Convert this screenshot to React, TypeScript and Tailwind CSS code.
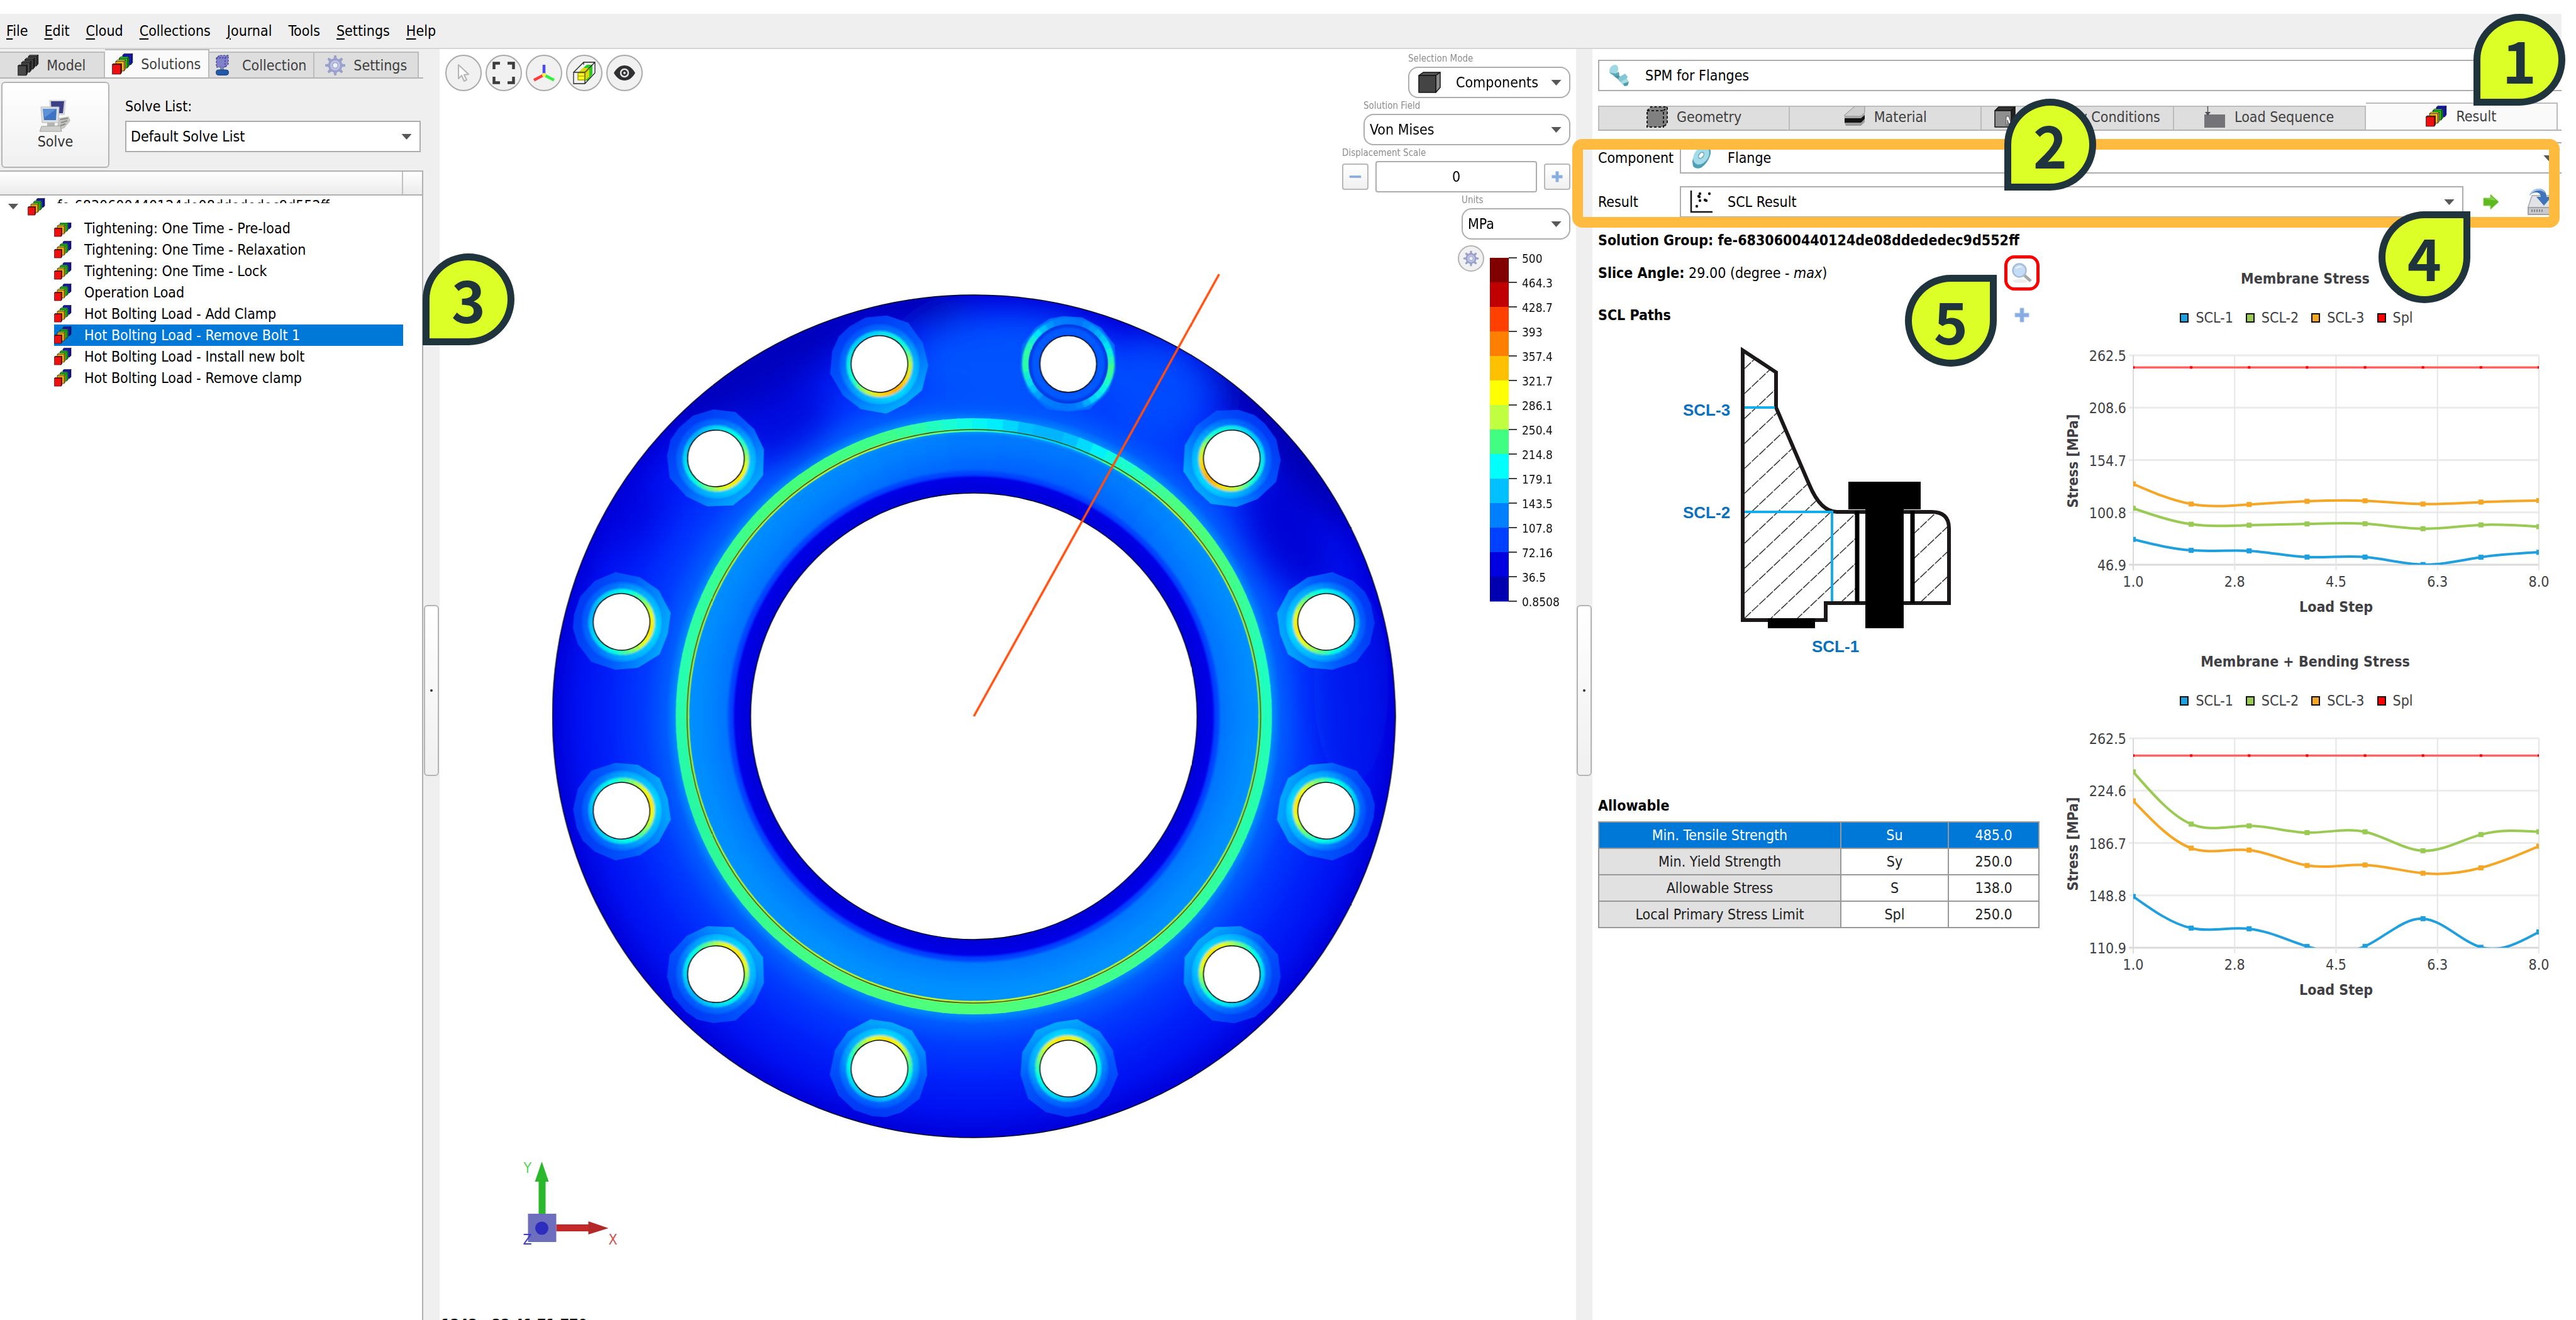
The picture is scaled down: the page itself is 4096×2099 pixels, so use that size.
import { useState, type ReactNode } from "react";

type IconProps = { className?: string };

/* ---------- icons ---------- */

const RESULT_COLORS = [
  ["#1a1ae0", "#1010b4", "#2020f0"],
  ["#1ed61a", "#14a812", "#30e82c"],
  ["#f8b814", "#dca010", "#ffe028"],
  ["#ee1010", "#a00808", "#d81010"],
];
const DARK_COLORS = [
  ["#484848", "#2a2a2a", "#5a5a5a"],
  ["#484848", "#2a2a2a", "#5a5a5a"],
  ["#484848", "#2a2a2a", "#5a5a5a"],
  ["#484848", "#2a2a2a", "#5a5a5a"],
];

function CubeRow({ className, colors }: IconProps & { colors: string[][] }) {
  return (
    <svg viewBox="0 0 28 28" className={className} aria-hidden="true">
      {colors.map(([front, side, top], i) => {
        const x = 14 - i * 4.5;
        const y = 2.2 + i * 4.1;
        const d = i === 3 ? 1.2 : 2;
        return (
          <g key={i} stroke="#0a0a0a" strokeWidth="0.6" strokeLinejoin="round">
            <path d={`M${x} ${y}l${d}-${d}h11l-${d} ${d}z`} fill={top} />
            <path d={`M${x + 11} ${y}l${d}-${d}v12l-${d} ${d}z`} fill={side} />
            <rect x={x} y={y} width="11" height="12.6" fill={front} />
          </g>
        );
      })}
    </svg>
  );
}
const ResultIcon = (p: IconProps) => <CubeRow {...p} colors={RESULT_COLORS} />;
const ModelIcon = (p: IconProps) => <CubeRow {...p} colors={DARK_COLORS} />;

function GearIcon({ className }: IconProps) {
  return (
    <svg viewBox="0 0 32 32" className={className} aria-hidden="true">
      <g fill="#9aa0cc">
        {[0, 45, 90, 135, 180, 225, 270, 315].map((a) => (
          <path key={a} d="M13.4 7l1-6h3.2l1 6z" transform={`rotate(${a} 16 16)`} />
        ))}
        <circle cx="16" cy="16" r="10.5" />
      </g>
      <circle cx="16" cy="16" r="7.5" fill="#bfc4e4" />
      <circle cx="16" cy="16" r="4" fill="#eef0fa" stroke="#8d93c0" strokeWidth="1" />
    </svg>
  );
}

function CollectionIcon({ className }: IconProps) {
  return (
    <svg viewBox="0 0 22 34" className={className} aria-hidden="true">
      <path d="M1 5l5-4h14v14l-5 5H1z" fill="#8080cc" />
      <path d="M1 5h14v15M15 5l5-4" fill="none" stroke="#3c3c80" strokeWidth="1.4" strokeDasharray="2.5 2" />
      <path d="M1 5v15h14l5-5V1H6z" fill="none" stroke="#3c3c80" strokeWidth="1.2" strokeDasharray="3 2" />
      <path d="M7 20h6v4H7z" fill="#7f88a8" />
      <rect x="0.5" y="24" width="20" height="8.5" rx="4" fill="#2158a8" stroke="#17407c" />
    </svg>
  );
}

function ComputersIcon({ className }: IconProps) {
  return (
    <svg viewBox="0 0 50 52" className={className} aria-hidden="true">
      <path d="M15 1h27l-2 24H17z" fill="#d4d6da" />
      <path d="M18 3h21l-2 19H19z" fill="#3a3f86" />
      <path d="M30 30l16-3 3 7-10 12-12 4z" fill="#c4c4c0" />
      <path d="M33 32l12-2M34 37l10-3M33 42l8-3" stroke="#8a8a88" strokeWidth="2" />
      <path d="M2 12h29l-1 25H4z" fill="#dcdee2" stroke="#b8babe" />
      <path d="M5 15h22l-1 18H7z" fill="#3d74c4" />
      <path d="M5 15h22l-19 14z" fill="#5e92d8" />
      <path d="M12 37h12v5H12z" fill="#b4b4b2" />
      <path d="M3 43l30-1 2 9H0z" fill="#cfcfcb" stroke="#a0a09c" />
    </svg>
  );
}

function CursorIcon({ className }: IconProps) {
  return (
    <svg viewBox="0 0 20 30" className={className} aria-hidden="true">
      <path d="M2 2v22l5-5 4 9 4-2-4-8 7-1z" fill="#fdfdfd" stroke="#b4b4b4" strokeWidth="2" strokeLinejoin="round" />
    </svg>
  );
}
function FitIcon({ className }: IconProps) {
  return (
    <svg viewBox="0 0 36 36" className={className} aria-hidden="true">
      <path d="M2.5 12V2.5H12M24 2.5h9.500V12M33.500 24v9.500H24M12 33.500H2.500V24" fill="none" stroke="#3c3c3c" strokeWidth="4.500" />
    </svg>
  );
}
function AxesIcon({ className }: IconProps) {
  return (
    <svg viewBox="0 0 36 28" className={className} aria-hidden="true">
      <g strokeWidth="4.500">
        <path d="M18 17V1" stroke="#4848ff" />
        <path d="M18 17L2 25.500" stroke="#ff3c3c" />
        <path d="M18 17l16 8.500" stroke="#30f040" />
      </g>
      <circle cx="18" cy="17" r="3" fill="#fff04a" />
    </svg>
  );
}
function SliceIcon({ className }: IconProps) {
  return (
    <svg viewBox="0 0 36 36" className={className} aria-hidden="true">
      <path d="M8 18L22 5h9v15L24 30H8z" fill="#28c828" />
      <path d="M8 18l8-8h10v14l-7 6H8z" fill="#e0d80c" />
      <rect x="8" y="18" width="11" height="11" fill="#ffff20" />
      <path d="M1 17h18v18H1zM1 17L17 1h18v17L19 35M19 17L35 1M17 1v4" fill="none" stroke="#222" strokeWidth="1.300" />
      <path d="M8 18h11v11H8zM19 18l8-8M8 23h11" fill="none" stroke="#8c8600" strokeWidth="1.200" />
    </svg>
  );
}
function EyeIcon({ className }: IconProps) {
  return (
    <svg viewBox="0 0 34 24" className={className} aria-hidden="true">
      <path d="M0 12C5 3.500 10.500 0 17 0s12 3.500 17 12c-5 8.500-10.500 12-17 12S5 20.500 0 12z" fill="#303032" />
      <circle cx="17" cy="12" r="6" fill="#303032" stroke="#e4e4e4" strokeWidth="2.500" />
      <circle cx="17" cy="12" r="2" fill="#e0e0e0" />
    </svg>
  );
}
function BlockIcon({ className }: IconProps) {
  return (
    <svg viewBox="0 0 36 34" className={className} aria-hidden="true">
      <g stroke="#141414" strokeWidth="1.500" strokeLinejoin="round">
        <path d="M1 6l7-5h27l-7 5z" fill="#555" />
        <path d="M28 6l7-5v24l-7 8z" fill="#8a8a8a" />
        <path d="M1 6h27v27H1z" fill="#444" />
      </g>
    </svg>
  );
}
function GeometryIcon({ className }: IconProps) {
  return (
    <svg viewBox="0 0 34 34" className={className} aria-hidden="true">
      <path d="M1 7l6-6h26v26l-6 6H1z" fill="#808080" />
      <path d="M1 7h26v26H1zM27 7l6-6M1 7l6-6h26v26l-6 6" fill="none" stroke="#1c1c1c" strokeWidth="2" strokeDasharray="4 3" />
    </svg>
  );
}
function MaterialIcon({ className }: IconProps) {
  return (
    <svg viewBox="0 0 34 34" className={className} aria-hidden="true">
      <path d="M1 14L17 0h16v10L27 16H1z" fill="#cfcfcf" stroke="#8c8c8c" />
      <path d="M1 15h26l6-6v6l-6 5H1z" fill="#a8a8a8" />
      <path d="M1 19h26l6-5v7l-6 6H1z" fill="#141414" />
      <path d="M1 26h26l6-6v5l-6 6H3z" fill="#9a9a9a" />
    </svg>
  );
}
function BoundaryIcon({ className }: IconProps) {
  return (
    <svg viewBox="0 0 34 34" className={className} aria-hidden="true">
      <g stroke="#141414" strokeWidth="1.500" strokeLinejoin="round">
        <path d="M1 7l6-6h26l-6 6z" fill="#333" />
        <path d="M27 7l6-6v26l-6 6z" fill="#222" />
        <path d="M1 7h26v26H1z" fill="#8f8f8f" />
      </g>
      <path d="M19 16h4l4 12h-4l-2-6v8h-2z" fill="#fff" stroke="#333" strokeWidth="0.800" />
    </svg>
  );
}
function LoadIcon({ className }: IconProps) {
  return (
    <svg viewBox="0 0 34 34" className={className} aria-hidden="true">
      <rect x="0" y="13" width="33" height="21" fill="#747478" />
      <path d="M5.500 0v14" stroke="#505054" strokeWidth="1.500" />
      <path d="M1 9h9l-4.500 6z" fill="#505054" />
    </svg>
  );
}
function BoltIcon({ className }: IconProps) {
  return (
    <svg viewBox="0 0 34 34" className={className} aria-hidden="true">
      <path d="M13 12l9 10 6 4-3 4-8-6-9-7z" fill="#4b93a4" />
      <ellipse cx="9" cy="8" rx="6.500" ry="8.500" transform="rotate(32 9 8)" fill="#9fd8e2" />
      <path d="M2 12l8 6 8-2-1-5-5 3-6-1z" fill="#5aa9b8" />
      <path d="M17 20l10-6 4 5-2 5-9 4-4-4z" fill="#84c6d3" />
      <path d="M21 26l9-4 3 5-2 6-5 1-5-4z" fill="#a6dbe5" />
      <path d="M24 30l9-3-2 6-5 1z" fill="#4e9aab" />
    </svg>
  );
}
function FlangeIcon({ className }: IconProps) {
  return (
    <svg viewBox="0 0 34 34" className={className} aria-hidden="true">
      <path d="M24 1c6-1 9 3 8 9-1 7-7 17-14 22-5 3-12 2-14-2l-1-7c0-7 8-19 21-22z" fill="#4f9fb4" />
      <ellipse cx="17" cy="13.500" rx="11" ry="15.500" transform="rotate(36 17 13.500)" fill="#a4dbe8" />
      <ellipse cx="17" cy="13" rx="3.500" ry="5.500" transform="rotate(36 17 13)" fill="#fff" stroke="#62aabd" strokeWidth="1.500" />
    </svg>
  );
}
function ScatterIcon({ className }: IconProps) {
  return (
    <svg viewBox="0 0 36 36" className={className} aria-hidden="true">
      <path d="M2 0v34h34" fill="none" stroke="#161616" strokeWidth="2.500" />
      <g fill="#161616">
        {[[16, 5], [31, 5], [15, 10], [16, 16], [26, 16], [11, 25], [14, 9], [24, 15]].map(([x, y]) => (
          <circle key={`${x}-${y}`} cx={x} cy={y} r="2.200" />
        ))}
      </g>
    </svg>
  );
}
function RunArrowIcon({ className }: IconProps) {
  return (
    <svg viewBox="0 0 26 26" className={className} aria-hidden="true">
      <path d="M1 7h11V1l13 12-13 12v-6H1z" fill="#5eb820" stroke="#8ccf58" strokeWidth="1" />
      <path d="M2 8h11V4l8 7z" fill="#8ad24a" />
    </svg>
  );
}
function SaveIcon({ className }: IconProps) {
  return (
    <svg viewBox="0 0 44 44" className={className} aria-hidden="true">
      <path d="M7 12h30l6 18v12H1V30z" fill="#e2e3e6" stroke="#a4a6aa" strokeWidth="1.500" />
      <path d="M1 31h42v11H1z" fill="#c8cacd" stroke="#94969a" strokeWidth="1.500" />
      <path d="M6 36h18" stroke="#85878b" strokeWidth="4" strokeDasharray="2 2" />
      <path d="M3 12C7-2 30-4 30 14h8L26 28 14 14h7c0-8-11-10-18-2z" fill="#3f74bd" />
      <path d="M3 12C7-2 24-2 28 8 20 0 10 4 3 12z" fill="#a9c8ee" />
    </svg>
  );
}
function MagnifierIcon({ className }: IconProps) {
  return (
    <svg viewBox="0 0 34 34" className={className} aria-hidden="true">
      <ellipse cx="14" cy="30" rx="12" ry="3" fill="#ececec" />
      <path d="M20 20l11 10" stroke="#a8a8a8" strokeWidth="5" />
      <circle cx="13" cy="13" r="10.500" fill="#c4dcf6" stroke="#a8bcd8" strokeWidth="2.500" />
      <path d="M6 11c2-5 8-6 12-3-5 0-9 1-12 3z" fill="#eef6ff" />
    </svg>
  );
}
function PlusIcon({ className }: IconProps) {
  return (
    <svg viewBox="0 0 24 24" className={className} aria-hidden="true">
      <path d="M9 1h6v8h8v6h-8v8H9v-8H1V9h8z" fill="#86ace0" stroke="#a9c4ea" strokeWidth="1" />
    </svg>
  );
}
function MinusIcon({ className }: IconProps) {
  return (
    <svg viewBox="0 0 24 24" className={className} aria-hidden="true">
      <path d="M2 10h20v4H2z" fill="#86ace0" />
    </svg>
  );
}
function Caret({ className }: IconProps) {
  return (
    <svg viewBox="0 0 18 10" className={className} aria-hidden="true">
      <path d="M0 0h18l-9 10z" fill="#585858" />
    </svg>
  );
}

/* ---------- form parts ---------- */

function Combo({
  id,
  label,
  value,
  icon,
  className = "",
  selectClass = "pl-2",
}: {
  id: string;
  label?: string;
  value: string;
  icon?: ReactNode;
  className?: string;
  selectClass?: string;
}) {
  return (
    <div className={`relative flex h-[50px] items-center border-2 border-[#adadad] bg-white ${className}`}>
      {icon}
      <select
        id={id}
        aria-label={label}
        defaultValue={value}
        className={`h-full min-w-0 flex-1 appearance-none bg-transparent outline-none ${selectClass}`}
      >
        <option>{value}</option>
      </select>
      <Caret className="pointer-events-none absolute right-3 top-[19px] h-[9px] w-[17px]" />
    </div>
  );
}

/* ---------- left panel ---------- */

const MENU = [
  ["F", "ile"],
  ["E", "dit"],
  ["C", "loud"],
  ["C", "ollections"],
  ["J", "ournal"],
  ["", "Tools"],
  ["S", "ettings"],
  ["H", "elp"],
];

const LEFT_TABS = [
  { name: "Model", icon: <ModelIcon className="size-[34px]" /> },
  { name: "Solutions", icon: <ResultIcon className="size-[34px]" /> },
  { name: "Collection", icon: <CollectionIcon className="mr-2 h-[34px] w-[22px]" /> },
  { name: "Settings", icon: <GearIcon className="size-[34px]" /> },
];

const STEPS = [
  "Tightening: One Time - Pre-load",
  "Tightening: One Time - Relaxation",
  "Tightening: One Time - Lock",
  "Operation Load",
  "Hot Bolting Load - Add Clamp",
  "Hot Bolting Load - Remove Bolt 1",
  "Hot Bolting Load - Install new bolt",
  "Hot Bolting Load - Remove clamp",
];

function LeftPanel() {
  const [tab, setTab] = useState("Solutions");
  const [step, setStep] = useState(5);
  return (
    <aside className="flex w-[673px] shrink-0 flex-col">
      <div role="tablist" className="flex items-end border-b-2 border-[#b4b4b4] pr-[7px]">
        {LEFT_TABS.map((t) => (
          <button
            key={t.name}
            role="tab"
            aria-selected={tab === t.name}
            onClick={() => setTab(t.name)}
            className={`flex flex-1 items-center justify-center gap-3 border-t-2 border-r-2 border-[#bcbcbc] text-[#404040] ${
              tab === t.name ? "h-[45px] bg-[#fafafa]" : "h-[41px] bg-[#dedede]"
            }`}
          >
            {t.icon}
            {t.name}
          </button>
        ))}
      </div>
      <div className="flex pt-[5px] pl-0.5">
        <button className="flex h-[137px] w-[172px] flex-col items-center justify-center rounded-md border-2 border-[#b4b4b4] bg-linear-to-b from-white to-[#f0f0f0] text-[#303030]">
          <ComputersIcon className="h-[52px] w-[50px]" />
          Solve
        </button>
        <div className="ml-[25px] flex w-[470px] flex-col pt-6">
          <label htmlFor="solve-list" className="mb-2 leading-[30px]">
            Solve List:
          </label>
          <Combo id="solve-list" value="Default Solve List" selectClass="pl-[7px]" />
        </div>
      </div>
      <div className="mt-1 flex h-10 border-y-2 border-r-2 border-[#b0b0b0] bg-linear-to-b from-white to-[#ebebeb]">
        <div className="flex-1 border-r-2 border-[#c0c0c0]" />
        <div className="w-[30px]" />
      </div>
      <div className="flex-1 border-r-2 border-[#b0b0b0] bg-white">
        <div className="flex h-[35px] items-center">
          <Caret className="ml-3 h-[9px] w-[18px]" />
          <ResultIcon className="ml-[14px] size-[28px]" />
          <div className="mt-1 ml-[19px] h-[8px] self-start overflow-hidden leading-6">
            fe-6830600440124de08ddededec9d552ff
          </div>
        </div>
        <ul>
          {STEPS.map((s, i) => (
            <li key={s}>
              <button
                onClick={() => setStep(i)}
                className={`ml-[86px] flex h-[34px] w-[555px] items-center gap-5 text-left ${
                  i === step ? "bg-[#0078d7] text-white" : ""
                }`}
              >
                <ResultIcon className={i === 0 ? "size-[28px] [clip-path:inset(5px_0_0_0)]" : "size-[28px]"} />
                {s}
              </button>
            </li>
          ))}
        </ul>
      </div>
    </aside>
  );
}

function Splitter() {
  return (
    <div className="flex w-[26px] shrink-0 items-center justify-center pt-[18px]">
      <div className="flex h-[272px] w-6 items-center justify-center rounded-md border-2 border-[#b4b4b4] bg-linear-to-b from-white to-[#f0f0f0]">
        <span className="size-1 rounded-full bg-[#333]" />
      </div>
    </div>
  );
}

/* ---------- stress plot of the flange ---------- */

type Stop = [number, string];

function mix(stops: Stop[], t: number) {
  let i = 0;
  while (i < stops.length - 2 && t > stops[i + 1][0]) i++;
  const [t0, a] = stops[i];
  const [t1, b] = stops[i + 1];
  const f = Math.min(1, Math.max(0, (t - t0) / (t1 - t0)));
  const ch = (c: string, k: number) => parseInt(c.slice(1 + k * 2, 3 + k * 2), 16);
  const v = [0, 1, 2].map((k) => Math.round(ch(a, k) + (ch(b, k) - ch(a, k)) * f));
  return `rgb(${v.join(",")})`;
}

function polar(r: number, deg: number): [number, number] {
  const a = (deg * Math.PI) / 180;
  return [r * Math.sin(a), -r * Math.cos(a)];
}

function SweepRing({ r, width, stops, step }: { r: number; width: number; stops: Stop[]; step: number }) {
  const parts = [];
  for (let a = -180; a < 180; a += step) {
    const [x0, y0] = polar(r, a - 0.3);
    const [x1, y1] = polar(r, a + step + 0.3);
    parts.push(
      <path
        key={a}
        d={`M${x0.toFixed(2)} ${y0.toFixed(2)}A${r} ${r} 0 0 1 ${x1.toFixed(2)} ${y1.toFixed(2)}`}
        stroke={mix(stops, a + step / 2)}
        strokeWidth={width}
        fill="none"
      />,
    );
  }
  return <>{parts}</>;
}

const GROOVE: Stop[] = [
  [-180, "#50ff78"],
  [-150, "#46ff80"],
  [-110, "#28f8a0"],
  [-80, "#28ffb0"],
  [-40, "#46ff78"],
  [-15, "#3cff8c"],
  [-3, "#14ffdc"],
  [4, "#00f0ff"],
  [12, "#00b4ff"],
  [18, "#00b4ff"],
  [25, "#00f0ff"],
  [32, "#1effc8"],
  [45, "#50ff78"],
  [60, "#46ff82"],
  [80, "#1effc0"],
  [110, "#28ffaa"],
  [180, "#50ff78"],
];
const GROOVE_EDGE: Stop[] = [
  [-180, "#c0f030"],
  [-90, "#8cf050"],
  [-20, "#b4f03c"],
  [0, "#3cffa0"],
  [10, "#00d2ff"],
  [20, "#00d2ff"],
  [30, "#50ff82"],
  [45, "#b4f03c"],
  [90, "#78f060"],
  [180, "#c0f030"],
];
const INNER_TINT: Stop[] = [
  [-180, "#0098ff"],
  [-30, "#0088ff"],
  [0, "#006eff"],
  [25, "#0064ff"],
  [50, "#0088ff"],
  [180, "#0098ff"],
];
const HOT: Stop[] = [
  [-180, "#ffa800"],
  [-150, "#ffdc00"],
  [-120, "#b4ff46"],
  [-90, "#14ffd2"],
  [0, "#00c8ff"],
  [90, "#14ffd2"],
  [120, "#b4ff46"],
  [150, "#ffdc00"],
  [180, "#ffa800"],
];
const WARM: Stop[] = [
  [-180, "#ffe600"],
  [-150, "#e6ff14"],
  [-120, "#64ff82"],
  [-90, "#00ffe6"],
  [0, "#00aaff"],
  [90, "#00ffe6"],
  [120, "#64ff82"],
  [150, "#e6ff14"],
  [180, "#ffe600"],
];
const OUTER_HALO: Stop[] = [
  [-180, "#00dcff"],
  [-110, "#00aaff"],
  [-60, "#0070ff"],
  [0, "#0058ff"],
  [60, "#0070ff"],
  [110, "#00aaff"],
  [180, "#00dcff"],
];
const FREED: Stop[] = [
  [-180, "#0074ff"],
  [-145, "#0080ff"],
  [-120, "#00d2ff"],
  [-95, "#28ffaa"],
  [-72, "#32ffa0"],
  [-45, "#00e6ff"],
  [-20, "#0084ff"],
  [15, "#0074ff"],
  [40, "#00a0ff"],
  [70, "#00f0f0"],
  [98, "#46ff82"],
  [120, "#14ffdc"],
  [145, "#00d2ff"],
  [165, "#0084ff"],
  [180, "#0074ff"],
];

const HALO_SHAPE = [
  [-8, -76], [22, -74], [52, -58], [74, -30], [76, 10], [64, 44],
  [34, 72], [0, 76], [-34, 72], [-64, 44], [-76, 10], [-74, -30], [-52, -58], [-30, -72],
]
  .map((p) => p.join(","))
  .join(" ");

function BoltHole({ angle }: { angle: number }) {
  const [x, y] = polar(580, angle);
  const freed = angle === 15;
  const hot = angle === 345 || angle === 45;
  const turn = angle === 345 ? angle - 18 : angle === 45 ? angle + 5 : angle;
  return (
    <g transform={`translate(${x.toFixed(1)} ${y.toFixed(1)}) rotate(${freed ? 0 : turn})`}>
      {freed ? (
        <>
          <polygon points={HALO_SHAPE} fill="#006cff" />
          <g filter="url(#soft1)">
            <SweepRing r={68} width={11} stops={FREED} step={10} />
          </g>
          <circle r="63" fill="#003ce6" />
          <circle r="52" fill="none" stroke="#0058ff" strokeWidth="12" filter="url(#soft2)" />
        </>
      ) : (
        <>
          <polygon points={HALO_SHAPE} fill="url(#halo)" />
          <circle r="64" fill="url(#haloInner)" />
          <g filter="url(#soft2)">
            <SweepRing r={56} width={10} stops={OUTER_HALO} step={10} />
            <SweepRing r={48} width={9} stops={hot ? HOT : WARM} step={10} />
          </g>
        </>
      )}
      <circle r="45" fill="#fff" stroke="#101010" strokeWidth="1.500" />
    </g>
  );
}

function Viewer3D() {
  return (
    <svg
      viewBox="0 0 1808 2021"
      preserveAspectRatio="xMidYMid slice"
      className="absolute inset-0 h-full w-full"
      role="img"
      aria-label="Von Mises stress on the flange"
    >
      <defs>
        <radialGradient id="plate" gradientUnits="userSpaceOnUse" cx="0" cy="0" r="670">
          <stop offset="0.530" stopColor="#0000d8" />
          <stop offset="0.566" stopColor="#0000e8" />
          <stop offset="0.573" stopColor="#003cff" />
          <stop offset="0.590" stopColor="#005aff" />
          <stop offset="0.640" stopColor="#0082ff" />
          <stop offset="0.675" stopColor="#0092ff" />
          <stop offset="0.705" stopColor="#0090ff" />
          <stop offset="0.730" stopColor="#005cff" />
          <stop offset="0.780" stopColor="#003cff" />
          <stop offset="0.860" stopColor="#0022fa" />
          <stop offset="0.940" stopColor="#0010f0" />
          <stop offset="1" stopColor="#0000d8" />
        </radialGradient>
        <linearGradient id="halo" x1="0" y1="0" x2="0" y2="1">
          <stop offset="0" stopColor="#0038f4" />
          <stop offset="0.500" stopColor="#005aff" />
          <stop offset="1" stopColor="#00aaff" />
        </linearGradient>
        <linearGradient id="haloInner" x1="0" y1="0" x2="0" y2="1">
          <stop offset="0" stopColor="#0048fa" />
          <stop offset="0.500" stopColor="#0070ff" />
          <stop offset="1" stopColor="#00c0ff" />
        </linearGradient>
        <filter id="soft1"><feGaussianBlur stdDeviation="1" /></filter>
        <filter id="soft2"><feGaussianBlur stdDeviation="1.600" /></filter>
        <filter id="soft40" x="-60%" y="-60%" width="220%" height="220%"><feGaussianBlur stdDeviation="26" /></filter>
        <clipPath id="outerPlate">
          <path clipRule="evenodd" d="M-670 0a670 670 0 1 0 1340 0a670 670 0 1 0-1340 0zM-473 0a473 473 0 1 0 946 0a473 473 0 1 0-946 0z" />
        </clipPath>
      </defs>

      <g transform="translate(850 1061)">
        <circle r="670" fill="url(#plate)" />
        <g clipPath="url(#outerPlate)">
          <g filter="url(#soft40)">
            <ellipse cx="-330" cy="-560" rx="180" ry="50" transform="rotate(-30 -330 -560)" fill="#0000b4" opacity="0.800" />
            <ellipse cx="-300" cy="-470" rx="80" ry="50" transform="rotate(-33 -300 -470)" fill="#0000d2" opacity="0.700" />
            <ellipse cx="-100" cy="-655" rx="90" ry="24" fill="#0000a8" opacity="0.900" />
            <ellipse cx="505" cy="-440" rx="170" ry="45" transform="rotate(49 505 -440)" fill="#0000b0" opacity="0.950" />
            <ellipse cx="500" cy="-290" rx="100" ry="55" transform="rotate(60 500 -290)" fill="#0000d0" opacity="0.900" />
            <ellipse cx="60" cy="-560" rx="160" ry="80" fill="#0058ff" opacity="0.900" />
            <ellipse cx="290" cy="-520" rx="90" ry="80" transform="rotate(30 290 -520)" fill="#0050ff" opacity="0.900" />
            <ellipse cx="-560" cy="-330" rx="60" ry="60" fill="#0000d8" opacity="0.600" />
            <ellipse cx="600" cy="-50" rx="60" ry="160" fill="#0010e8" opacity="0.500" />
          </g>
        </g>
        <g opacity="0.550" filter="url(#soft2)">
          <SweepRing r={420} width={58} stops={INNER_TINT} step={5} />
        </g>
        <SweepRing r={465} width={18} stops={GROOVE} step={3} />
        <SweepRing r={455} width={5} stops={GROOVE_EDGE} step={3} />
        <circle r="456" fill="none" stroke="#34501c" strokeWidth="1.500" />
        <circle r="670" fill="none" stroke="#05051e" strokeWidth="1.500" />
        <circle r="355" fill="#fff" stroke="#05051e" strokeWidth="1.500" />
        {Array.from({ length: 12 }, (_, k) => (
          <BoltHole key={k} angle={15 + 30 * k} />
        ))}
        <path d="M0 0L390 -703" stroke="#ff4e0e" strokeWidth="3.500" />
      </g>

      <g>
        <rect x="158" y="1800" width="11" height="55" fill="#2cb82c" />
        <path d="M152 1801l11-32 11 32z" fill="#2cb82c" />
        <rect x="186" y="1869" width="52" height="11" fill="#c42828" />
        <path d="M237 1864l32 11-32 10z" fill="#b42828" />
        <rect x="141" y="1852" width="45" height="45" fill="#6e6ebe" />
        <circle cx="163" cy="1875" r="10.500" fill="#2c2cbe" />
        <g fontSize="23">
          <text x="134" y="1787" fill="#5cd45c">Y</text>
          <text x="269" y="1901" fill="#d25050">X</text>
          <text x="133" y="1901" fill="#3c3cc8">Z</text>
        </g>
        <text x="3" y="2036" fontSize="23" fontWeight="700">1242 - 22 41 71.770</text>
      </g>
    </svg>
  );
}

const BANDS: [string, string][] = [
  ["#800000", "500"],
  ["#c00000", "464.3"],
  ["#ff4000", "428.7"],
  ["#ff8000", "393"],
  ["#ffc000", "357.4"],
  ["#ffff00", "321.7"],
  ["#c0ff40", "286.1"],
  ["#40ff80", "250.4"],
  ["#00ffff", "214.8"],
  ["#00c0ff", "179.1"],
  ["#0080ff", "143.5"],
  ["#0040ff", "107.8"],
  ["#0000e0", "72.16"],
  ["#0000b0", "36.5"],
];

function StressScale() {
  return (
    <svg viewBox="0 0 128 590" className="h-[590px] w-[128px]" role="img" aria-label="Stress scale in MPa">
      {BANDS.map(([color, label], i) => (
        <g key={label}>
          <rect x="0" y={20 + i * 39} width="30" height="39.500" fill={color} />
          <path d={`M30 ${20 + i * 39}h13`} stroke="#000" strokeWidth="1.500" />
          <text x="51" y={28 + i * 39} fontSize="19" fill="#101010">{label}</text>
        </g>
      ))}
      <path d="M30 566h13" stroke="#000" strokeWidth="1.500" />
      <text x="51" y="574" fontSize="19" fill="#101010">0.8508</text>
    </svg>
  );
}

const TOOLS: [string, ReactNode][] = [
  ["Select", <CursorIcon className="h-[30px] w-5" />],
  ["Fit view", <FitIcon className="size-[36px]" />],
  ["Axes", <AxesIcon className="h-7 w-9" />],
  ["Slice", <SliceIcon className="size-[36px]" />],
  ["Visibility", <EyeIcon className="h-6 w-[34px]" />],
];

function Viewport() {
  return (
    <main className="relative flex flex-1 items-start justify-between overflow-hidden bg-white px-[9px]">
      <Viewer3D />
      <div className="relative flex gap-[6px] pt-[9px]">
        {TOOLS.map(([name, icon]) => (
          <button
            key={name}
            aria-label={name}
            className="flex size-[58px] items-center justify-center rounded-full border-2 border-[#ababab] bg-[#f1f1f1]"
          >
            {icon}
          </button>
        ))}
      </div>
      <div className="relative flex flex-col items-end pt-[3px]">
        <div className="w-[258px]">
          <label htmlFor="mode" className="block text-[15px] leading-[25px] text-[#8c8c8c]">Selection Mode</label>
          <Combo
            id="mode"
            value="Components"
            icon={<BlockIcon className="ml-[14px] h-[34px] w-9 shrink-0" />}
            className="rounded-2xl"
            selectClass="pl-6"
          />
        </div>
        <div className="w-[329px]">
          <label htmlFor="field" className="block text-[15px] leading-[25px] text-[#8c8c8c]">Solution Field</label>
          <Combo id="field" value="Von Mises" className="rounded-2xl" />
        </div>
        <div className="w-[363px]">
          <label htmlFor="scale" className="block text-[15px] leading-[25px] text-[#8c8c8c]">Displacement Scale</label>
          <div className="flex items-center gap-[11px]">
            <button aria-label="Decrease scale" className="flex size-[42px] items-center justify-center rounded border-2 border-[#b8b8b8] bg-linear-to-b from-white to-[#f0f0f0]">
              <MinusIcon className="size-[22px]" />
            </button>
            <input id="scale" defaultValue="0" className="h-[50px] w-[257px] rounded border-2 border-[#adadad] bg-white text-center" />
            <button aria-label="Increase scale" className="flex size-[42px] items-center justify-center rounded border-2 border-[#b8b8b8] bg-linear-to-b from-white to-[#f0f0f0]">
              <PlusIcon className="size-[18px]" />
            </button>
          </div>
        </div>
        <div className="w-[173px]">
          <label htmlFor="units" className="block text-[15px] leading-[25px] text-[#8c8c8c]">Units</label>
          <Combo id="units" value="MPa" className="rounded-2xl" />
        </div>
        <div className="flex items-start gap-[9px] pt-[9px]">
          <button aria-label="Legend settings" className="flex size-[42px] items-center justify-center rounded-full border-2 border-[#b4b4b4] bg-[#f1f1f1]">
            <GearIcon className="size-[26px]" />
          </button>
          <StressScale />
        </div>
      </div>
    </main>
  );
}

/* ---------- right panel ---------- */

function SclDiagram() {
  const outline =
    "M100 7V436H232V409H428V290Q428 264 400 264H250C228 264 214 240 206 221L153 98V42Z";
  const hatch = Array.from({ length: 20 }, (_, i) => {
    const y = 36 + i * 39.700;
    return `M103 ${y}l330 -311`;
  }).join("");
  return (
    <svg viewBox="0 0 450 500" className="h-[500px] w-[450px]" role="img" aria-label="SCL path locations">
      <defs>
        <clipPath id="section">
          <path d={outline} />
        </clipPath>
      </defs>
      <path d={hatch} clipPath="url(#section)" stroke="#333" strokeWidth="1.500" strokeDasharray="14 2" fill="none" />
      <rect x="282" y="264" width="88" height="144" fill="#fff" />
      <path d={outline} fill="none" stroke="#1c1819" strokeWidth="6" />
      <path d="M282 262v147M370 262v147" stroke="#000" strokeWidth="7" />
      <rect x="268" y="216" width="115" height="44" />
      <rect x="295" y="216" width="61" height="233" />
      <rect x="140" y="433" width="75" height="16" />
      <path d="M103 98h48M103 264h139v142" fill="none" stroke="#12aeec" strokeWidth="4" />
      <g fontFamily="'Liberation Sans', sans-serif" fontWeight="700" fontSize="26" fill="#0a70c0">
        <text x="5" y="111">SCL-3</text>
        <text x="5" y="274">SCL-2</text>
        <text x="210" y="487">SCL-1</text>
      </g>
    </svg>
  );
}

type Series = { name: string; color: string; values: number[] };

const MEMBRANE: Series[] = [
  { name: "SCL-1", color: "#209fdf", values: [73.0, 61.7, 61.2, 54.8, 54.8, 47.1, 54.6, 59.7] },
  { name: "SCL-2", color: "#99ca53", values: [105.0, 88.6, 87.6, 88.9, 89.1, 84.0, 87.9, 86.1] },
  { name: "SCL-3", color: "#f6a625", values: [130.1, 109.4, 108.9, 112.2, 112.7, 109.4, 111.4, 113.0] },
];
const BENDING: Series[] = [
  { name: "SCL-1", color: "#209fdf", values: [148.0, 125.1, 124.6, 111.8, 111.9, 131.9, 111.2, 122.3] },
  { name: "SCL-2", color: "#99ca53", values: [238.2, 200.4, 199.1, 194.2, 194.8, 181.1, 192.8, 194.8] },
  { name: "SCL-3", color: "#f6a625", values: [217.2, 183.0, 181.6, 170.4, 170.8, 164.8, 168.7, 184.4] },
];

/* Natural cubic spline through evenly spaced points, as a Bezier path. */
function spline(xs: number[], ys: number[]) {
  const n = ys.length - 1;
  const solve = (p: number[]) => {
    const rhs = p.slice(0, n).map((_, i) =>
      i === 0 ? p[0] + 2 * p[1] : i === n - 1 ? (8 * p[n - 1] + p[n]) / 2 : 4 * p[i] + 2 * p[i + 1],
    );
    const out = [rhs[0] / 2];
    const tmp = [0];
    let b = 2;
    for (let i = 1; i < n; i++) {
      tmp[i] = 1 / b;
      b = (i < n - 1 ? 4 : 3.5) - tmp[i];
      out[i] = (rhs[i] - out[i - 1]) / b;
    }
    for (let i = 1; i < n; i++) out[n - i - 1] -= tmp[n - i] * out[n - i];
    return out;
  };
  const cx = solve(xs);
  const cy = solve(ys);
  let d = `M${xs[0]} ${ys[0]}`;
  for (let i = 0; i < n; i++) {
    const ex = i < n - 1 ? 2 * xs[i + 1] - cx[i + 1] : (xs[n] + cx[n - 1]) / 2;
    const ey = i < n - 1 ? 2 * ys[i + 1] - cy[i + 1] : (ys[n] + cy[n - 1]) / 2;
    d += `C${[cx[i], cy[i], ex, ey, xs[i + 1], ys[i + 1]].map((v) => v.toFixed(1)).join(" ")}`;
  }
  return d;
}

const PLOT = { left: 142, right: 787, top: 45, bottom: 378 };
const X_TICKS = ["1.0", "2.8", "4.5", "6.3", "8.0"];

function StressChart({
  id,
  title,
  ticks,
  series,
  className = "",
}: {
  id: string;
  title: string;
  ticks: number[];
  series: Series[];
  className?: string;
}) {
  const max = ticks[0];
  const min = ticks[ticks.length - 1];
  const w = PLOT.right - PLOT.left;
  const h = PLOT.bottom - PLOT.top;
  const sx = (i: number) => PLOT.left + (w * i) / 7;
  const sy = (v: number) => PLOT.top + (h * (max - v)) / (max - min);
  return (
    <figure className={className}>
      <figcaption className="pl-2 text-center leading-[30px] font-bold text-[#404044]">{title}</figcaption>
      <ul className="mt-8 flex justify-center gap-5 pr-5 leading-[30px] text-[#404044]">
        {[...series, { name: "Spl", color: "#ff0000", values: [] }].map((s) => (
          <li key={s.name} className="flex items-center gap-[11px]">
            <svg viewBox="0 0 14 15" className="h-[15px] w-[14px]" aria-hidden="true">
              <rect x="1" y="1" width="12" height="13" fill={s.color} stroke="#111" strokeWidth="2" />
            </svg>
            {s.name}
          </li>
        ))}
      </ul>
      <svg viewBox="0 0 823 470" className="h-[470px] w-[823px]" role="img" aria-label={title}>
        <defs>
          <clipPath id={id}>
            <rect x={PLOT.left} y={PLOT.top} width={w} height={h} />
          </clipPath>
        </defs>
        {ticks.map((t, i) => {
          const y = PLOT.top + (h * i) / 4;
          return (
            <g key={t}>
              <path d={`M${PLOT.left - 7} ${y}H${PLOT.right}`} stroke={i === 4 ? "#dadada" : "#ebebeb"} strokeWidth="3" />
              <text x={PLOT.left - 11} y={y + 9} textAnchor="end" fontSize="23" fill="#404044">{t.toFixed(1)}</text>
            </g>
          );
        })}
        {X_TICKS.map((t, i) => {
          const x = PLOT.left + (w * i) / 4;
          return (
            <g key={t}>
              <path d={`M${x} ${PLOT.top}V${PLOT.bottom + 9}`} stroke={i === 0 ? "#dadada" : "#e6e6e6"} strokeWidth="2" />
              <text x={x} y="413" textAnchor="middle" fontSize="23" fill="#404044">{t}</text>
            </g>
          );
        })}
        <g clipPath={`url(#${id})`}>
          <path d={`M${PLOT.left} ${sy(250)}H${PLOT.right}`} stroke="#ff6464" strokeWidth="3.500" />
          {series[0].values.map((_, i) => (
            <rect key={i} x={sx(i) - 2} y={sy(250) - 2} width="4" height="4" fill="#f00000" />
          ))}
          {series.map((s) => (
            <g key={s.name}>
              <path
                d={spline(s.values.map((_, i) => sx(i)), s.values.map(sy))}
                fill="none"
                stroke={s.color}
                strokeWidth="4"
              />
              {s.values.map((v, i) => (
                <rect key={i} x={sx(i) - 4} y={sy(v) - 4} width="8" height="8" fill={s.color} />
              ))}
            </g>
          ))}
        </g>
        <text x={(PLOT.left + PLOT.right) / 2} y="453" textAnchor="middle" fontSize="23" fontWeight="700" fill="#404044">
          Load Step
        </text>
        <text transform="translate(54 213) rotate(-90)" textAnchor="middle" fontSize="23" fontWeight="700" fill="#404044">
          Stress [MPa]
        </text>
      </svg>
    </figure>
  );
}

const RIGHT_TABS = [
  { name: "Geometry", icon: <GeometryIcon className="size-[34px]" /> },
  { name: "Material", icon: <MaterialIcon className="size-[34px]" /> },
  { name: "Boundary Conditions", icon: <BoundaryIcon className="size-[34px] shrink-0" /> },
  { name: "Load Sequence", icon: <LoadIcon className="size-[34px]" /> },
  { name: "Result", icon: <ResultIcon className="size-[34px]" /> },
];

const ALLOWABLE = [
  ["Min. Tensile Strength", "Su", "485.0"],
  ["Min. Yield Strength", "Sy", "250.0"],
  ["Allowable Stress", "S", "138.0"],
  ["Local Primary Stress Limit", "Spl", "250.0"],
];

function RightPanel() {
  const [tab, setTab] = useState("Result");
  const [row, setRow] = useState(0);
  return (
    <section className="flex w-[1541px] shrink-0 flex-col overflow-hidden bg-white pl-[9px]">
      <Combo
        id="analysis"
        label="Analysis"
        value="SPM for Flanges"
        icon={<BoltIcon className="ml-[14px] size-[34px] shrink-0" />}
        className="mt-[17px] border-r-0"
        selectClass="pl-[25px]"
      />
      <div role="tablist" className="mt-[18px] flex items-end border-b-2 border-[#b4b4b4] pr-[6px]">
        {RIGHT_TABS.map((t) => (
          <button
            key={t.name}
            role="tab"
            aria-selected={tab === t.name}
            onClick={() => setTab(t.name)}
            className={`flex w-1/5 items-center justify-center gap-[14px] border-t-2 border-r-2 border-[#bcbcbc] whitespace-nowrap text-[#404040] first:border-l-2 ${
              tab === t.name ? "h-[43px] bg-[#fafafa] pb-0.5" : "h-[38px] bg-[#dedede] pb-1"
            }`}
          >
            {t.icon}
            {t.name}
          </button>
        ))}
      </div>
      <div className="mt-[18px] flex items-center">
        <label htmlFor="component" className="w-[130px]">Component</label>
        <Combo
          id="component"
          value="Flange"
          icon={<FlangeIcon className="ml-[15px] size-[34px] shrink-0" />}
          className="flex-1 border-r-0"
          selectClass="pl-[25px]"
        />
      </div>
      <div className="mt-5 flex items-center">
        <label htmlFor="result" className="w-[130px]">Result</label>
        <Combo
          id="result"
          value="SCL Result"
          icon={<ScatterIcon className="ml-[14px] size-[36px] shrink-0" />}
          className="flex-1"
          selectClass="pl-6"
        />
        <button aria-label="Run" className="ml-[31px]">
          <RunArrowIcon className="size-[26px]" />
        </button>
        <button aria-label="Export" className="ml-[45px] mr-[10px]">
          <SaveIcon className="size-11" />
        </button>
      </div>
      <div className="flex">
        <div className="w-[702px] shrink-0 pt-[21px]">
          <p className="leading-[30px] font-bold">Solution Group: fe-6830600440124de08ddededec9d552ff</p>
          <div className="mt-[9px] flex items-center justify-between">
            <p className="leading-[30px]">
              <b>Slice Angle:</b> 29.00 (degree - <i>max</i>)
            </p>
            <button aria-label="Find slice angle" className="flex size-[56px] items-center justify-center rounded-2xl border-[5px] border-[#fa0000]">
              <MagnifierIcon className="size-[34px]" />
            </button>
          </div>
          <div className="mt-6 flex items-center justify-between pr-4">
            <p className="leading-[30px] font-bold">SCL Paths</p>
            <button aria-label="Add SCL path">
              <PlusIcon className="size-6" />
            </button>
          </div>
          <div className="mt-[34px] flex pl-[130px]">
            <SclDiagram />
          </div>
          <p className="mt-[216px] leading-[30px] font-bold">Allowable</p>
          <table className="mt-[10px] w-full border-collapse text-center text-[#202020]">
            <tbody>
              {ALLOWABLE.map((cells, r) => (
                <tr
                  key={cells[0]}
                  onClick={() => setRow(r)}
                  className={r === row ? "h-[42px] bg-[#0078d7] text-white" : "h-[42px]"}
                >
                  <th
                    scope="row"
                    className={`w-[385px] border-2 border-[#999] font-normal ${r === row ? "" : "bg-[#e1e1e1]"}`}
                  >
                    {cells[0]}
                  </th>
                  <td className="w-[171px] border-2 border-[#999]">{cells[1]}</td>
                  <td className="border-2 border-[#999]">{cells[2]}</td>
                </tr>
              ))}
            </tbody>
          </table>
        </div>
        <div className="min-w-0 flex-1 pt-[82px] pl-[7px]">
          <StressChart id="membrane" title="Membrane Stress" ticks={[262.5, 208.6, 154.7, 100.8, 46.9]} series={MEMBRANE} />
          <StressChart
            id="bending"
            title="Membrane + Bending Stress"
            ticks={[262.5, 224.6, 186.7, 148.8, 110.9]}
            series={BENDING}
            className="mt-[47px]"
          />
        </div>
      </div>
    </section>
  );
}

/* ---------- call-outs ---------- */

function Badge({ n, className }: { n: number; className: string }) {
  return (
    <div
      className={`absolute flex size-[146px] items-center justify-center rounded-full border-[11px] border-[#20343d] bg-[#dcff28] pb-1 font-['Noto_Sans_CJK_SC',sans-serif] text-[92px] leading-none font-bold text-[#20343d] ${className}`}
    >
      {n}
    </div>
  );
}

export default function App() {
  return (
    <div className="relative flex h-screen flex-col overflow-hidden bg-white pt-[22px] pr-[23px] font-['DejaVu_Sans_Condensed','Noto_Sans',sans-serif] text-[23px] leading-[30px] text-black">
      <nav className="flex h-[56px] shrink-0 items-center gap-[26px] border-b-2 border-[#d6d6d6] bg-[#efefef] pl-[10px]">
        {MENU.map(([key, rest]) => (
          <button key={key + rest}>
            <span className="underline decoration-2 underline-offset-4">{key}</span>
            {rest}
          </button>
        ))}
      </nav>
      <div className="flex min-h-0 flex-1 bg-[#efefef]">
        <LeftPanel />
        <Splitter />
        <Viewport />
        <Splitter />
        <RightPanel />
      </div>
      <div className="pointer-events-none absolute top-[221px] right-[26px] h-[141px] w-[1570px] rounded-2xl border-[17px] border-[#ffbb40]" />
      <Badge n={1} className="top-[22px] right-[17px] rounded-bl-md" />
      <Badge n={2} className="top-[157px] right-[763px] rounded-bl-md" />
      <Badge n={3} className="top-[403px] left-[672px] rounded-bl-md" />
      <Badge n={4} className="top-[336px] right-[168px] rounded-tr-md" />
      <Badge n={5} className="top-[437px] right-[921px] rounded-tr-md" />
    </div>
  );
}
